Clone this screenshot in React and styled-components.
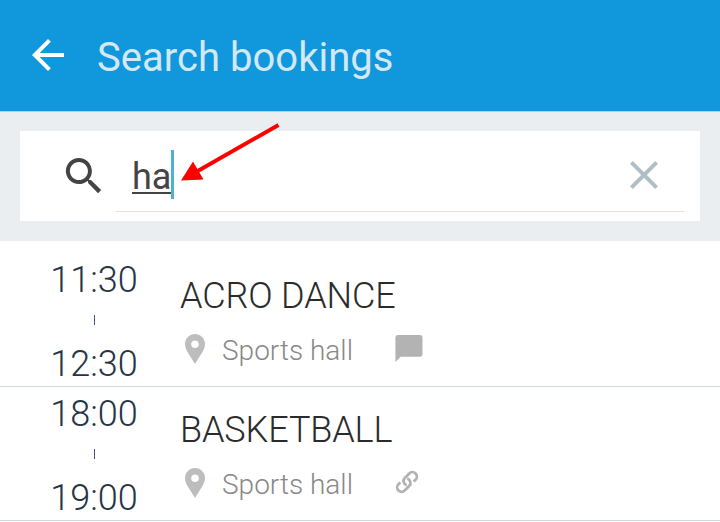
import { IoMdSearch } from "react-icons/io";
import { MdArrowBack, MdClose } from "react-icons/md";
import styled, { createGlobalStyle } from "styled-components";

const GlobalStyle = createGlobalStyle`
  * {
    box-sizing: border-box;
  }

  body {
    margin: 0;
    background-color: #fff;
    font-family: Roboto, "Liberation Sans", sans-serif;
  }

  svg {
    display: block;
    flex: none;
  }
`;

const Page = styled.div`
  position: relative;
  height: 522px;
  overflow: hidden;
`;

const Header = styled.header`
  display: flex;
  align-items: flex-start;
  gap: 25px;
  height: 111px;
  padding: 31px 24px 0;
  background-color: #1197db;
  color: #fff;
`;

const Title = styled.h1`
  margin: 3px 0 0;
  font-size: 40px;
  font-weight: 400;
  letter-spacing: 0.03px;
  line-height: 48px;
  color: #d3e8f3;
`;

const SearchArea = styled.div`
  padding: 19px 20px 20px;
  border-top: 1px solid #c3cdd3;
  background-color: #eaeef1;
`;

const SearchBox = styled.div`
  display: flex;
  height: 90px;
  padding: 0 16px 9px 40px;
  background-color: #fff;
  color: #444;

  & > svg {
    margin: 21px 9px 0 0;
  }
`;

const Field = styled.div`
  flex: 1;
  display: flex;
  align-items: flex-start;
  padding: 19px 16px 0;
  border-bottom: 1px solid #dfe3e4;
`;

const Query = styled.span`
  width: 40px;
  height: 44px;
  padding-top: 6px;
  border-bottom: 2px solid #444;
  font-size: 36px;
  line-height: 42px;
`;

const Caret = styled.span`
  width: 3px;
  height: 49px;
  margin-left: -1px;
  background-color: #4fafd6;
`;

const ClearButton = styled.button`
  margin: 1px 0 0 auto;
  padding: 0;
  border: 0;
  background: none;
  color: #b0bec5;
`;

const Pointer = styled.svg`
  position: absolute;
  left: 176px;
  top: 118px;
`;

const List = styled.ul`
  margin: 0;
  padding: 12px 0 0;
  list-style: none;
`;

const Row = styled.li`
  display: flex;
  height: 134px;
  padding: 6px 0 0 44px;
  border-bottom: 1px solid #cfd8dc;
`;

const Times = styled.div`
  display: flex;
  flex-direction: column;
  align-items: center;
  width: 100px;
  font-size: 36px;
  font-weight: 300;
  line-height: 42px;
  color: #263545;
`;

const Tick = styled.span`
  width: 1px;
  height: 10px;
  margin: 14px 0 18px;
  background-color: #3f5680;
`;

const Details = styled.div`
  padding: 16px 0 0 36px;
`;

const Name = styled.div`
  font-size: 36px;
  font-weight: 300;
  letter-spacing: -0.12px;
  line-height: 42px;
  color: #2b2b2b;
`;

const Place = styled.div`
  display: flex;
  align-items: flex-start;
  height: 36px;
  margin: 14px 0 0;
  padding-left: 5px;
  color: #bdbdbd;

  & > svg {
    margin-top: 3px;
  }
`;

const PlaceName = styled.span`
  width: 173px;
  margin-left: 17px;
  font-size: 28px;
  font-weight: 300;
  line-height: 40px;
  color: #888;
`;

const Marker = styled.span`
  margin-top: ${({ $top }) => $top}px;
  color: #b3b3b3;
`;

const bookings = [
  {
    start: "11:30",
    end: "12:30",
    name: "ACRO DANCE",
    place: "Sports hall",
    marker: "comment",
  },
  {
    start: "18:00",
    end: "19:00",
    name: "BASKETBALL",
    place: "Sports hall",
    marker: "link",
  },
];

function PinIcon() {
  return (
    <svg width="20" height="30" viewBox="0 0 20 30" fill="currentColor">
      <path
        fillRule="evenodd"
        d="M10 0C4.400 0 0 4.500 0 10C0 16 4.500 20.500 10 30C15.500 20.500 20 16 20 10C20 4.500 15.600 0 10 0ZM10 6.500A3.800 3.800 0 1 1 10 14.100A3.800 3.800 0 1 1 10 6.500Z"
      />
    </svg>
  );
}

function CommentIcon() {
  return (
    <svg width="28" height="27" viewBox="0 0 28 27" fill="currentColor">
      <path d="M3.2 0H24.8A2.7 2.7 0 0 1 27.5 2.7V19A2.7 2.7 0 0 1 24.8 21.7H5.7L.4 27V2.7A2.7 2.7 0 0 1 3.2 0Z" />
    </svg>
  );
}

function LinkIcon() {
  return (
    <svg
      width="24"
      height="24"
      viewBox="-12 -12 24 24"
      fill="none"
      stroke="currentColor"
      strokeWidth="2.8"
    >
      <g transform="rotate(-45)">
        <path d="M-2.500 2.200A4.400 4.400 0 0 1 1.300 -4.400H7.700A4.400 4.400 0 0 1 7.700 4.400H5" />
        <path d="M2.500 -2.200A4.400 4.400 0 0 1 -1.300 4.400H-7.700A4.400 4.400 0 0 1 -7.700 -4.400H-5" />
      </g>
    </svg>
  );
}

function Booking({ booking }) {
  const { start, end, name, place, marker } = booking;

  return (
    <Row>
      <Times>
        <span>{start}</span>
        <Tick />
        <span>{end}</span>
      </Times>
      <Details>
        <Name>{name}</Name>
        <Place>
          <PinIcon />
          <PlaceName>{place}</PlaceName>
          {marker === "comment" ? (
            <Marker $top={3.5}>
              <CommentIcon />
            </Marker>
          ) : (
            <Marker $top={5}>
              <LinkIcon />
            </Marker>
          )}
        </Place>
      </Details>
    </Row>
  );
}

function App() {
  return (
    <Page>
      <GlobalStyle />
      <Header>
        <MdArrowBack size={48} />
        <Title>Search bookings</Title>
      </Header>
      <SearchArea>
        <SearchBox>
          <IoMdSearch size={47} />
          <Field>
            <Query>ha</Query>
            <Caret />
            <ClearButton>
              <MdClose size={48} />
            </ClearButton>
          </Field>
        </SearchBox>
      </SearchArea>
      <List>
        {bookings.map((booking) => (
          <Booking key={booking.name} booking={booking} />
        ))}
      </List>
      <Pointer width="106" height="68" viewBox="0 0 106 68">
        <path d="M102.500 7L20 54" stroke="#f00" strokeWidth="4" />
        <path d="M5 62.500L17 43.500L27.500 61.500Z" fill="#f00" />
      </Pointer>
    </Page>
  );
}

export default App;
